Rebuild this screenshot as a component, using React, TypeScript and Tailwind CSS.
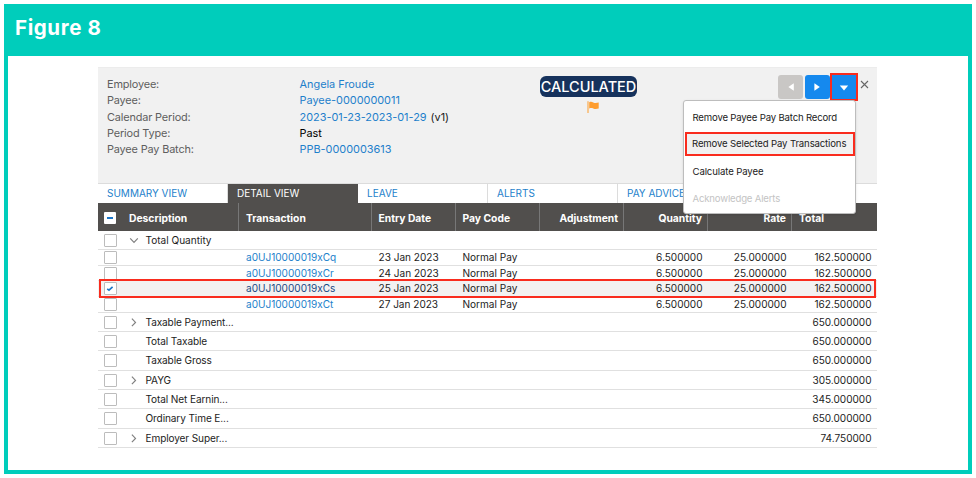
import { useState } from 'react';

const details = [
  { label: 'Employee:', value: 'Angela Froude', link: true },
  { label: 'Payee:', value: 'Payee-0000000011', link: true },
  { label: 'Calendar Period:', value: '2023-01-23-2023-01-29', link: true, note: '(v1)' },
  { label: 'Period Type:', value: 'Past', link: false },
  { label: 'Payee Pay Batch:', value: 'PPB-0000003613', link: true },
];

const tabs = ['SUMMARY VIEW', 'DETAIL VIEW', 'LEAVE', 'ALERTS', 'PAY ADVICE', ''];

const transactions = [
  { id: 'a0UJ10000019xCq', date: '23 Jan 2023' },
  { id: 'a0UJ10000019xCr', date: '24 Jan 2023' },
  { id: 'a0UJ10000019xCs', date: '25 Jan 2023' },
  { id: 'a0UJ10000019xCt', date: '27 Jan 2023' },
];

const totals = [
  { name: 'Taxable Payment...', total: '650.000000', expandable: true },
  { name: 'Total Taxable', total: '650.000000', expandable: false },
  { name: 'Taxable Gross', total: '650.000000', expandable: false },
  { name: 'PAYG', total: '305.000000', expandable: true },
  { name: 'Total Net Earnin...', total: '345.000000', expandable: false },
  { name: 'Ordinary Time E...', total: '650.000000', expandable: false },
  { name: 'Employer Super...', total: '74.750000', expandable: true },
];

const columns = 'grid grid-cols-[141px_132.5px_84.5px_84px_84px_84px_84px_85px]';

function Checkbox({ checked = false, onClick }: { checked?: boolean; onClick?: () => void }) {
  return (
    <button
      onClick={onClick}
      className="flex h-[13px] w-[12.5px] shrink-0 items-center justify-center rounded-[1px] border border-[#bcbcbc] bg-white"
    >
      {checked && (
        <svg width="8" height="7" viewBox="0 0 8 7" fill="none">
          <path d="M1.2 3.8 3 5.2 6.6 1.8" stroke="#1b76c8" strokeWidth="1.6" />
        </svg>
      )}
    </button>
  );
}

function Chevron({ open = false }: { open?: boolean }) {
  return (
    <svg width="10" height="10" viewBox="0 0 10 10" fill="none" stroke="#808080" strokeWidth="1.2">
      <path d={open ? 'M1.2 3.4 5 7.4 8.8 3.4' : 'M2.9 1.6 6.5 5.4 2.9 9.2'} />
    </svg>
  );
}

function ActionMenu() {
  return (
    <div className="absolute top-[32px] right-[21px] z-10 flex h-[114px] w-[173.5px] flex-col rounded-[3px] border border-[#bdbdbd] bg-white pt-[4px] text-[9.6px] whitespace-nowrap text-[#222] shadow-sm">
      <div className="flex h-[26.5px] items-center px-[9px] tracking-[-0.18px]">Remove Payee Pay Batch Record</div>
      <div className="ml-px flex h-[24.5px] w-[170px] items-center border-[2.5px] border-[#f92c1e] bg-[#f1f1f1] px-[5.5px] tracking-[-0.15px]">
        Remove Selected Pay Transactions
      </div>
      <div className="mt-[2px] flex h-[28px] items-center px-[9px] tracking-[-0.12px]">Calculate Payee</div>
      <div className="flex h-[26px] items-center px-[9px] tracking-[-0.18px] text-[#c4c4c4]">Acknowledge Alerts</div>
    </div>
  );
}

function Summary() {
  return (
    <div className="relative flex h-[116px] border-t border-[#ececec] bg-[#f1f1f1]">
      <div className="flex flex-col pt-[7.8px] pl-[9px]">
        {details.map((item) => (
          <div key={item.label} className="flex h-[16.4px] items-center text-[10.9px]">
            <span className="w-[192.5px] tracking-[-0.15px] text-[#5e5e5e]">{item.label}</span>
            <span className={item.link ? 'text-[#1d7fcb]' : 'text-black'}>{item.value}</span>
            {item.note && <span className="ml-[4px] text-[#222]">{item.note}</span>}
          </div>
        ))}
      </div>

      {/* Batch status */}
      <div className="absolute top-2 left-[442px] flex w-[97px] flex-col items-center">
        <div className="flex h-[20.5px] w-full items-center justify-center rounded-[6px] bg-[#16325c] pt-px text-[14.5px] font-medium text-white">
          CALCULATED
        </div>
        <svg className="mt-[4px] ml-[9px]" width="12" height="12" viewBox="0 0 12 12" fill="#fe9d2f">
          <path d="M.5.3h1V12h-1z" />
          <path d="M2.2 1.2c1.7-.7 2.8-.4 4 .2 1.6.7 3 .7 5.5.1v6c-2.5.7-3.9.5-5.5-.1-1.3-.5-2.4-.6-4 .1z" />
        </svg>
      </div>

      <div className="ml-auto flex items-start pt-[5px] pr-[8.5px]">
        <button className="mt-[2px] flex h-6 w-[25px] items-center justify-center rounded-[3px] bg-[#c9c7c5]">
          <svg width="6" height="8" viewBox="0 0 6 8" fill="#fff">
            <path d="M5.8.2v7.6L.4 4z" />
          </svg>
        </button>
        <button className="mt-[2px] ml-[2px] flex h-6 w-[24.5px] items-center justify-center rounded-[3px] bg-[#1589ee]">
          <svg width="6" height="8" viewBox="0 0 6 8" fill="#fff">
            <path d="M.4.2v7.6L5.8 4z" />
          </svg>
        </button>
        <button className="flex h-7 w-7 items-center justify-center border-[2.5px] border-[#f92c1e] bg-[#1589ee]">
          <svg className="mt-px" width="10" height="6" viewBox="0 0 10 6" fill="#fff">
            <path d="M.8.5h8.4L5 5.4z" />
          </svg>
        </button>
        <svg className="mt-[7px] ml-[2px]" width="9" height="9" viewBox="0 0 9 9" stroke="#666" strokeWidth="1.1">
          <path d="M1 1 8 8M8 1 1 8" />
        </svg>
      </div>
      <ActionMenu />
    </div>
  );
}

export default function App() {
  const [activeTab, setActiveTab] = useState('DETAIL VIEW');
  const [selected, setSelected] = useState('a0UJ10000019xCs');

  return (
    <main className="h-[478px] w-[976px] overflow-hidden bg-white p-1 font-['Inter',sans-serif]">
      <section className="h-[470px] border-4 border-t-0 border-[#00cdbb] bg-white">
        <header className="flex h-[52px] items-center bg-[#00cdbb] pb-[3px] pl-[7px]">
          <h1 className="text-[20.5px] font-bold tracking-[0.6px] text-white">Figure 8</h1>
        </header>

        <div className="mt-[11px] ml-[90px] w-[779px]">
          <Summary />

          <nav className="flex h-5 overflow-hidden border-t border-[#dcdcdc] text-[10px]">
            {tabs.map((tab) => (
              <button
                key={tab}
                onClick={() => setActiveTab(tab)}
                className={
                  tab === activeTab
                    ? 'w-[130px] shrink-0 bg-[#514f4d] pl-[9px] text-left text-white'
                    : 'w-[130px] shrink-0 border-r border-[#dcdcdc] pl-[9px] text-left text-[#1d7fcb]'
                }
              >
                {tab}
              </button>
            ))}
          </nav>

          <div className={`${columns} h-[27.5px] overflow-hidden bg-[#514f4d] text-[10.3px] leading-[30px] font-bold text-white`}>
            <div className="flex items-center border-r border-[#777] pl-[6px]">
              <span className="flex h-3 w-3 items-center justify-center rounded-[1px] bg-white">
                <span className="h-[2px] w-[6px] bg-[#1b76c8]" />
              </span>
              <span className="ml-[13px]">Description</span>
            </div>
            <div className="border-r border-[#777] pl-[7px]">Transaction</div>
            <div className="border-r border-[#777] pl-[7px]">Entry Date</div>
            <div className="border-r border-[#777] pl-[6.5px]">Pay Code</div>
            <div className="border-r border-[#777] pr-[5px] text-right">Adjustment</div>
            <div className="border-r border-[#777] pr-[5px] text-right">Quantity</div>
            <div className="border-r border-[#777] pr-[5px] text-right">Rate</div>
            <div className="pl-[7px]">Total</div>
          </div>

          <div className="text-[10.05px] text-[#1c1c1c]">
            <div className="flex h-[19.5px] items-center border-b border-[#e0e0e0] pt-px pl-[6px]">
              <Checkbox />
              <span className="ml-[12px] w-[17px]">
                <Chevron open />
              </span>
              Total Quantity
            </div>

            {transactions.map((row) => {
              const active = row.id === selected;
              return (
                <div
                  key={row.id}
                  className={`${columns} relative h-[15.7px] items-center border-b border-[#e0e0e0] ${active ? 'z-[1] bg-[#f3f1f1]' : ''}`}
                >
                  <div className="pl-[6px]">
                    <Checkbox checked={active} onClick={() => setSelected(row.id)} />
                  </div>
                  <div className={active ? 'pl-[7px] text-[#1a4a85]' : 'pl-[7px] text-[#1d7fcb]'}>{row.id}</div>
                  <div className="pl-[7px]">{row.date}</div>
                  <div className="pl-[6.5px]">Normal Pay</div>
                  <div />
                  <div className="pr-[5.5px] text-right">6.500000</div>
                  <div className="pr-[5.5px] text-right">25.000000</div>
                  <div className="pr-[5.5px] text-right">162.500000</div>
                  {active && (
                    <div className="pointer-events-none absolute -top-[2px] right-px -bottom-[2px] left-px border-[2px] border-[#f92c1e]" />
                  )}
                </div>
              );
            })}

            {totals.map((row) => (
              <div key={row.name} className="flex h-[19.3px] items-center border-b border-[#e0e0e0] pt-px pr-[5.5px] pl-[6px]">
                <Checkbox />
                <span className="ml-[12px] w-[17px]">{row.expandable && <Chevron />}</span>
                <span className="tracking-[-0.1px]">{row.name}</span>
                <span className="ml-auto">{row.total}</span>
              </div>
            ))}
          </div>
        </div>
      </section>
    </main>
  );
}
